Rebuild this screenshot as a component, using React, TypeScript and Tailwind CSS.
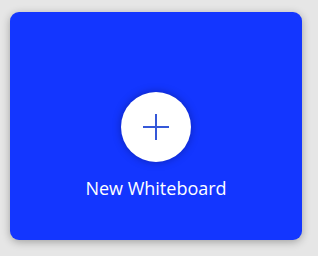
import React from 'react';

const PlusIcon: React.FC = () => (
  <svg width="28" height="28" viewBox="0 0 28 28" fill="none">
    <path d="M14 1v26M1 14h26" stroke="#3558d8" strokeWidth="2" />
  </svg>
);

const App: React.FC = () => {
  return (
    <div className="w-[318px] h-[256px] bg-[#e6e6e6] pl-[10px] pt-[12px]">
      <button
        className="w-[292px] h-[228px] rounded-[9px] bg-[#1336ff] shadow-[0_2px_8px_rgba(0,0,0,0.3)] flex flex-col items-center pt-[80px]"
        style={{ fontFamily: '"Open Sans", "Noto Sans", sans-serif' }}
      >
        <div className="w-[70px] h-[70px] rounded-full bg-white flex items-center justify-center shadow-[0_0_8px_rgba(0,0,40,0.35)]">
          <PlusIcon />
        </div>
        <span className="mt-[14px] text-[18px] leading-[24px] text-white">New Whiteboard</span>
      </button>
    </div>
  );
};

export default App;
